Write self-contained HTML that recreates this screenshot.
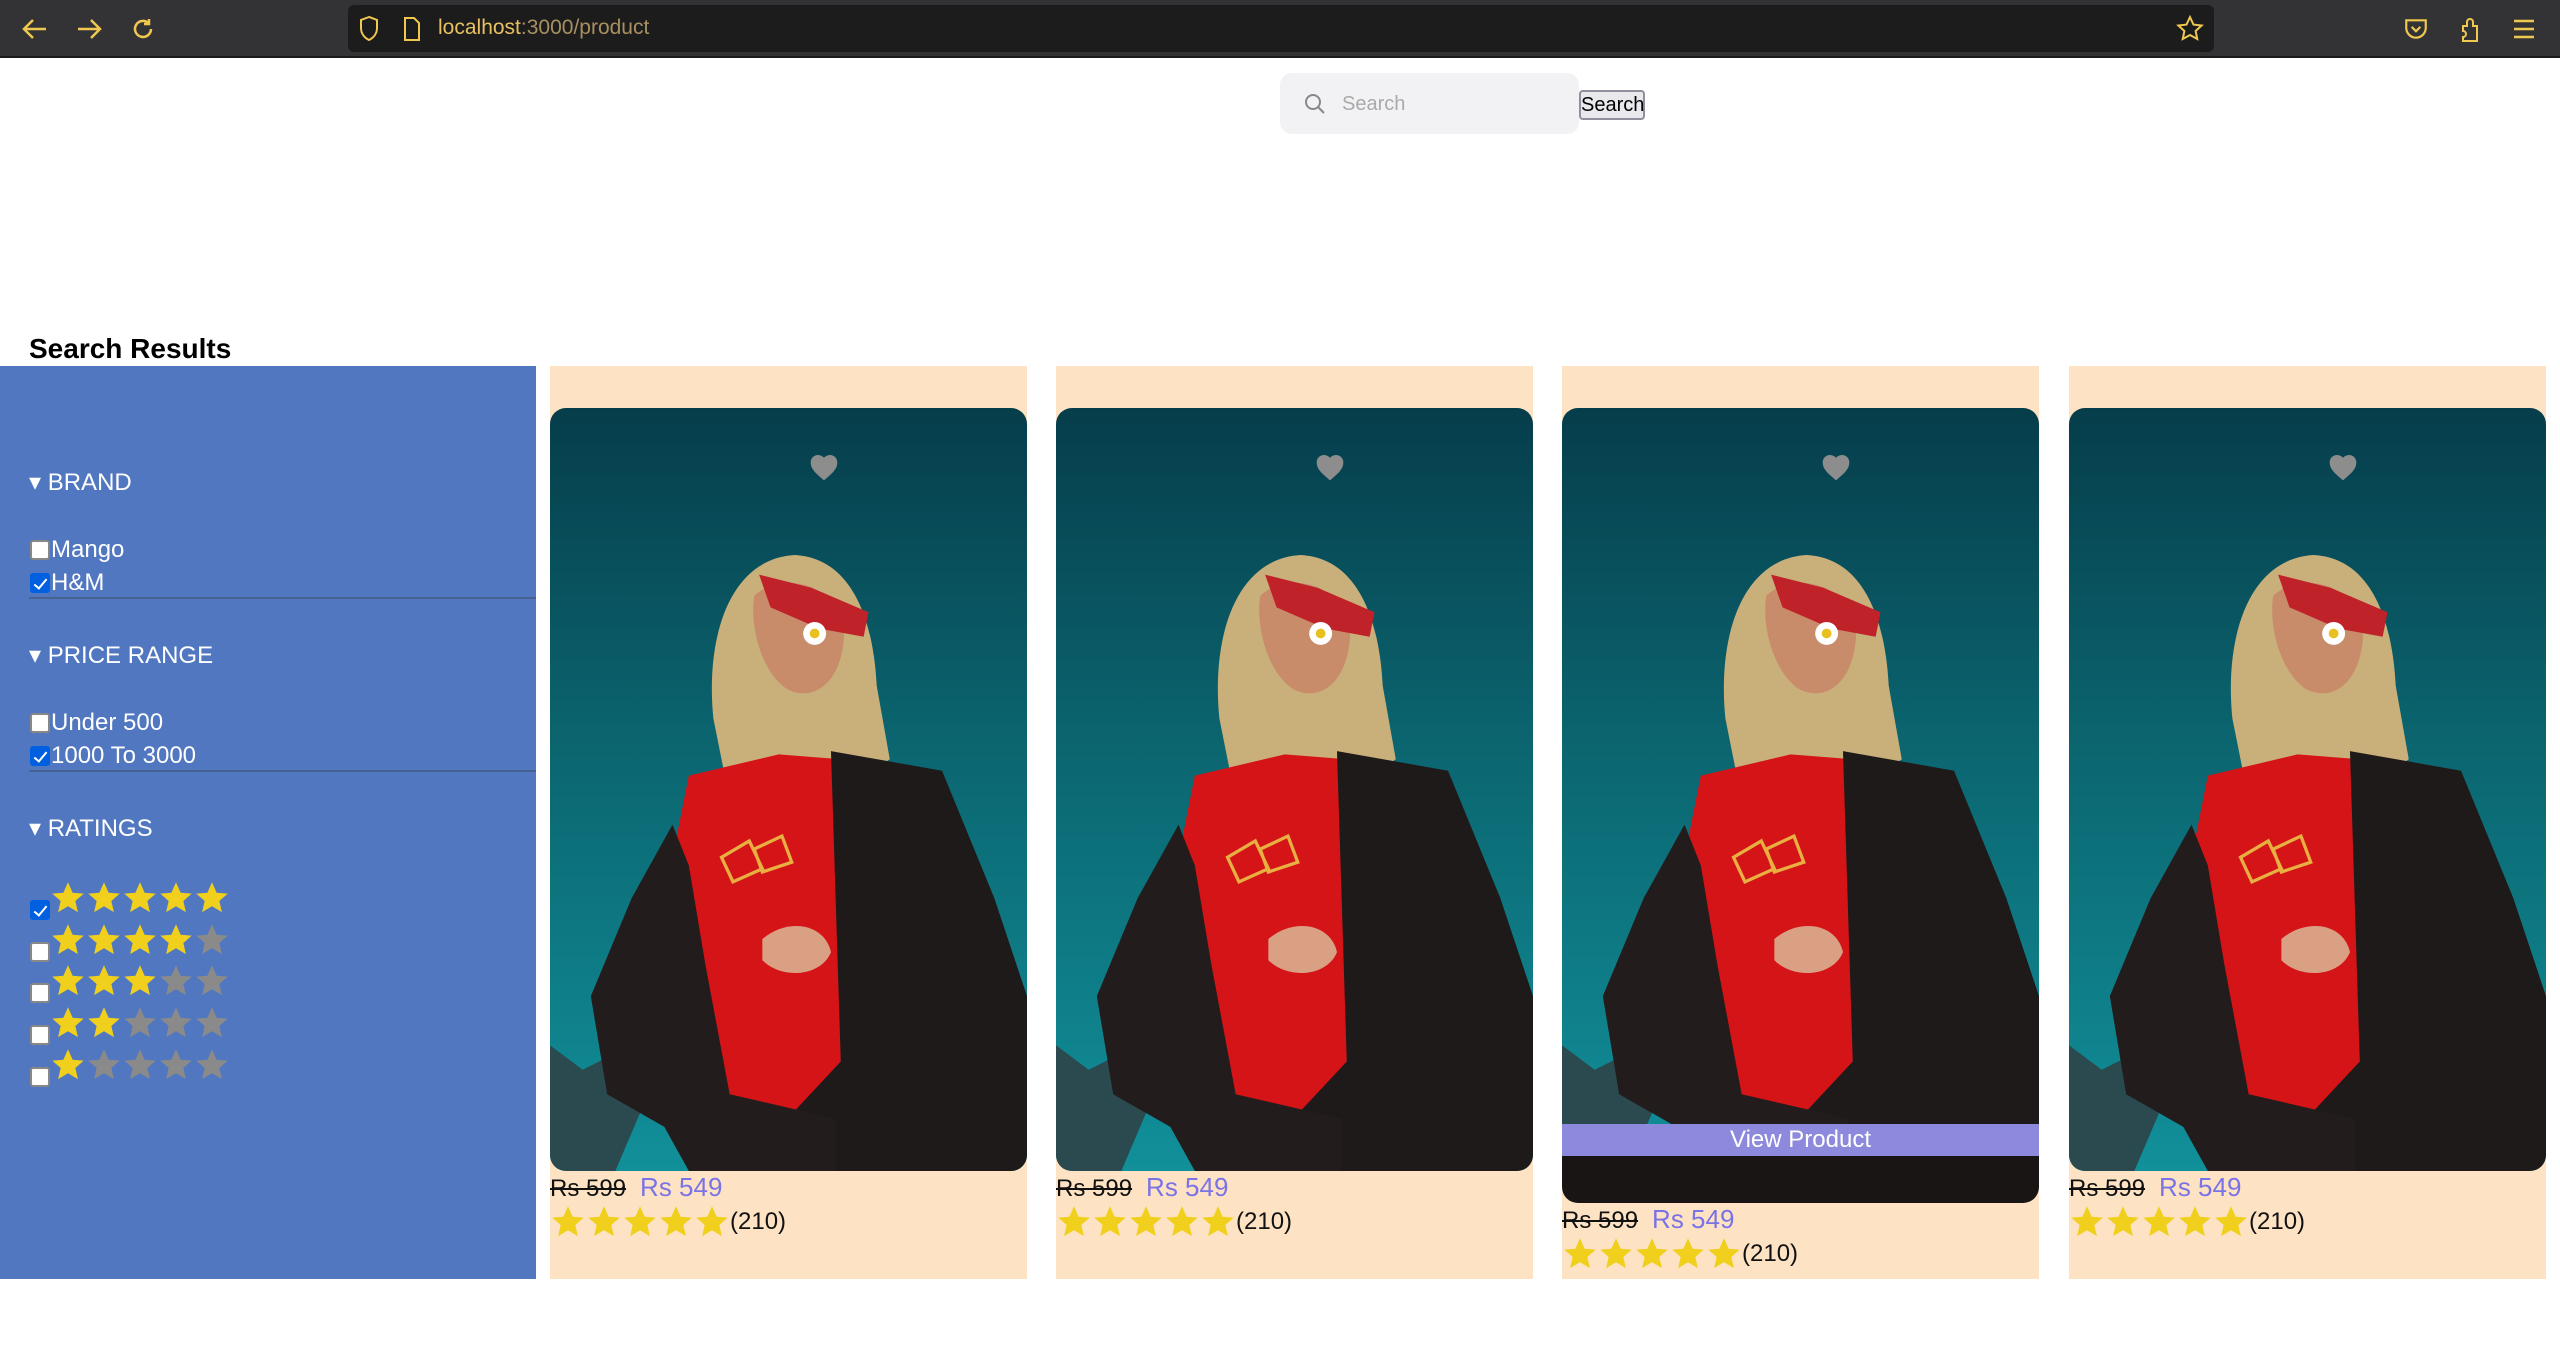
<!DOCTYPE html>
<html><head><meta charset="utf-8"><style>
*{box-sizing:border-box;margin:0;padding:0}
body{width:2560px;height:1369px;background:#fff;font-family:"Liberation Sans",sans-serif;position:relative;overflow:hidden}
.chrome{position:absolute;left:0;top:0;width:2560px;height:58px;background:#333336;border-bottom:2px solid #1a1a1a}
.url{position:absolute;left:348px;top:5px;width:1866px;height:47px;background:#1c1c1c;border-radius:6px}
.urltext{position:absolute;left:438px;top:16px;font-size:21px;color:#e8c060}
.urltext span{color:#a89060}
.ic{position:absolute}
.abs{position:absolute}
.sb{position:absolute;left:0;top:366px;width:536px;height:913px;background:#5077c0;color:#fff;font-size:23px}
.card{position:absolute;top:366px;width:477px;height:913px;background:#fde3c3}
.img{position:absolute;left:0;top:42px;width:477px;height:763px;border-radius:16px;overflow:hidden}
.cb{position:absolute;width:20px;height:20px;background:#fff;border:2px solid #888;border-radius:3px}
.cb.on{background:#0060df;border-color:#0060df}
.cb.on:after{content:"";position:absolute;left:5px;top:1px;width:5px;height:11px;border:solid #fff;border-width:0 2px 2px 0;transform:rotate(40deg)}
.line{position:absolute;left:29px;width:507px;height:2px;background:#46628f}
.price{position:absolute;left:0;font-size:26px}
.old{text-decoration:line-through;color:#111;font-size:24px}
.new{color:#7a73e6;margin-left:14px}
.stars{position:absolute;left:0;display:flex;align-items:center;font-size:24px;color:#111}
</style></head><body>
<div class="chrome">
<svg class="ic" style="left:20px;top:17px" width="30" height="24" viewBox="0 0 30 24" fill="none" stroke="#f0c850" stroke-width="2.5"><path d="M26 12H5M13 3l-9 9 9 9"/></svg>
<svg class="ic" style="left:74px;top:17px" width="30" height="24" viewBox="0 0 30 24" fill="none" stroke="#f0c850" stroke-width="2.5"><path d="M4 12h21M17 3l9 9-9 9"/></svg>
<svg class="ic" style="left:130px;top:16px" width="26" height="26" viewBox="0 0 26 26" fill="none" stroke="#f0c850" stroke-width="2.5"><path d="M21 13a8 8 0 1 1-3-6.3"/><path d="M19 3v5h-5"/></svg>
<div class="url"></div>
<svg class="ic" style="left:358px;top:15px" width="22" height="28" viewBox="0 0 22 28" fill="none" stroke="#f0c850" stroke-width="2"><path d="M11 2L3 5v8c0 6 4 10 8 12 4-2 8-6 8-12V5z"/></svg>
<svg class="ic" style="left:402px;top:16px" width="20" height="26" viewBox="0 0 20 26" fill="none" stroke="#f0c850" stroke-width="2"><path d="M3 2h9l5 5v17H3z"/></svg>
<div class="urltext">localhost<span>:3000/product</span></div>
<svg class="ic" style="left:2175px;top:14px" width="30" height="30" viewBox="0 0 24 24" fill="none" stroke="#f0c850" stroke-width="1.6"><path d="M12 2.5l2.8 6 6.5.7-4.8 4.4 1.3 6.4L12 16.8 6.2 20l1.3-6.4L2.7 9.2l6.5-.7z"/></svg>
<svg class="ic" style="left:2403px;top:16px" width="26" height="26" viewBox="0 0 24 24" fill="none" stroke="#f0c850" stroke-width="2"><path d="M3 4h18v7a9 9 0 0 1-18 0z"/><path d="M8 10l4 4 4-4"/></svg>
<svg class="ic" style="left:2458px;top:14px" width="24" height="30" viewBox="0 0 24 30" fill="none" stroke="#f0c850" stroke-width="2"><path d="M8 27h11V12h-4V8a3 3 0 0 0-6 0v4H5v5a3 3 0 0 1 3 3 3 3 0 0 1-3 3v4z"/></svg>
<svg class="ic" style="left:2512px;top:18px" width="24" height="22" viewBox="0 0 24 22" stroke="#f0c850" stroke-width="2.5"><path d="M2 3h20M2 11h20M2 19h20"/></svg>
</div>

<div class="abs" style="left:1280px;top:73px;width:299px;height:61px;background:#f2f2f4;border-radius:12px"></div>
<svg class="abs" style="left:1304px;top:93px" width="22" height="22" viewBox="0 0 22 22" fill="none" stroke="#888" stroke-width="2"><circle cx="9" cy="9" r="7"/><path d="M14 14l6 6"/></svg>
<div class="abs" style="left:1342px;top:93px;font-size:20px;color:#aaa">Search</div>
<div class="abs" style="left:1579px;top:90px;width:66px;height:30px;background:#e9e9ed;border:2px solid #8f8f9d;border-radius:4px;font-size:20px;color:#000;text-align:center;line-height:26px">Search</div>

<div class="abs" style="left:29px;top:333px;font-size:28px;font-weight:bold;color:#000">Search Results</div>

<div class="sb">
<div class="abs" style="left:29px;top:102px;font-size:24px">▾ BRAND</div>
<div class="cb" style="left:30px;top:174px"></div><div class="abs" style="left:51px;top:170px;font-size:24px">Mango</div>
<div class="cb on" style="left:30px;top:207px"></div><div class="abs" style="left:51px;top:203px;font-size:24px">H&amp;M</div>
<div class="line" style="top:231px"></div>
<div class="abs" style="left:29px;top:275px;font-size:24px">▾ PRICE RANGE</div>
<div class="cb" style="left:30px;top:347px"></div><div class="abs" style="left:51px;top:343px;font-size:24px">Under 500</div>
<div class="cb on" style="left:30px;top:380px"></div><div class="abs" style="left:51px;top:376px;font-size:24px">1000 To 3000</div>
<div class="line" style="top:404px"></div>
<div class="abs" style="left:29px;top:448px;font-size:24px">▾ RATINGS</div>
<div id="rat"></div>
</div>

<div id="cards"></div>

<script>
function star(c,s){return '<svg width="'+s+'" height="'+s+'" viewBox="0 0 24 24"><path fill="'+c+'" d="M12 1.5l3.1 7 7.4.6-5.6 4.9 1.7 7.4L12 17.5l-6.6 3.9 1.7-7.4L1.5 9.1l7.4-.6z"/></svg>';}
var Y='#f0d01c',G='#8a8a8a';
var r='',tops=[514,556,597,639,681];
for(var i=0;i<5;i++){var t=tops[i];
r+='<div class="cb'+(i==0?' on':'')+'" style="left:30px;top:'+(t+20)+'px"></div>';
var s='';for(var j=0;j<5;j++)s+=star(j<5-i?Y:G,36);
r+='<div class="abs" style="left:50px;top:'+(t)+'px;display:flex;gap:0">'+s+'</div>';}
document.getElementById('rat').outerHTML=r;

var img='<svg width="477" height="763" viewBox="0 0 292 467" preserveAspectRatio="none"><defs><linearGradient id="bg" x1="0" y1="0" x2="0" y2="1"><stop offset="0" stop-color="#063d4b"/><stop offset=".45" stop-color="#0b6670"/><stop offset="1" stop-color="#11909a"/></linearGradient></defs><rect width="292" height="467" fill="url(#bg)"/>'+
'<path d="M0 390 L20 405 L40 395 L60 420 L40 467 L0 467Z" fill="#2a4a50"/>'+
'<path d="M100 190 C95 140 110 92 150 90 C185 92 198 130 200 170 L208 215 L180 235 L110 240Z" fill="#c9b07a"/>'+
'<path d="M125 115 C140 100 178 105 180 140 C178 170 160 180 145 172 C130 162 122 135 125 115Z" fill="#c98c6a"/>'+
'<path d="M128 102 L160 110 L195 125 L192 140 L165 135 L135 122Z" fill="#c0222a"/>'+
'<circle cx="162" cy="138" r="7" fill="#fff"/><circle cx="162" cy="138" r="3" fill="#e8c020"/>'+
'<path d="M85 225 L140 212 L178 215 L178 445 L90 445 L70 300Z" fill="#d51418"/>'+
'<path d="M172 210 L240 222 L272 300 L292 360 L292 467 L120 467 L150 430 L178 400Z" fill="#1f1a1a"/>'+
'<path d="M75 255 L50 300 L25 360 L35 420 L70 440 L85 467 L175 467 L175 435 L110 420 L95 340 L85 280Z" fill="#221c1c"/>'+
'<path d="M130 325 C145 312 168 315 172 333 C166 348 142 350 130 338Z" fill="#d9a083"/>'+
'<path d="M105 275 L122 265 L130 282 L112 290Z M125 270 L142 262 L148 278 L130 284Z" fill="none" stroke="#e8b040" stroke-width="2"/>'+
'</svg>';
function heart(){return '<svg class="abs" style="left:258px;top:44px" width="32" height="30" viewBox="0 0 24 22"><path fill="#8d8d8d" d="M12 21l-1.5-1.3C5 15 2 12 2 7.5 2 4.4 4.4 2 7.5 2c1.7 0 3.4.8 4.5 2.1C13.1 2.8 14.8 2 16.5 2 19.6 2 22 4.4 22 7.5c0 4.5-3 7.5-8.5 12.2z"/></svg>';}
var lefts=[550,1056,1562,2069],h='';
for(var k=0;k<4;k++){var ex=(k==2)?32:0;var ss='';for(var q=0;q<5;q++)ss+=star(Y,36);
h+='<div class="card" style="left:'+lefts[k]+'px"><div class="img" style="height:'+(763+ex)+'px">'+img+heart()+
(k==2?'<div class="abs" style="left:0;top:716px;width:477px;height:32px;background:#8d8ade;color:#fff;font-size:24px;text-align:center;line-height:32px">View Product</div><div class="abs" style="left:0;top:748px;width:477px;height:47px;background:#1a1515"></div>':'')+
'</div><div class="price" style="top:'+(806+ex)+'px"><span class="old">Rs 599</span><span class="new">Rs 549</span></div>'+
'<div class="stars" style="top:'+(838+ex)+'px">'+ss+'<span>(210)</span></div></div>';}
document.getElementById('cards').outerHTML=h;
</script>
</body></html>
